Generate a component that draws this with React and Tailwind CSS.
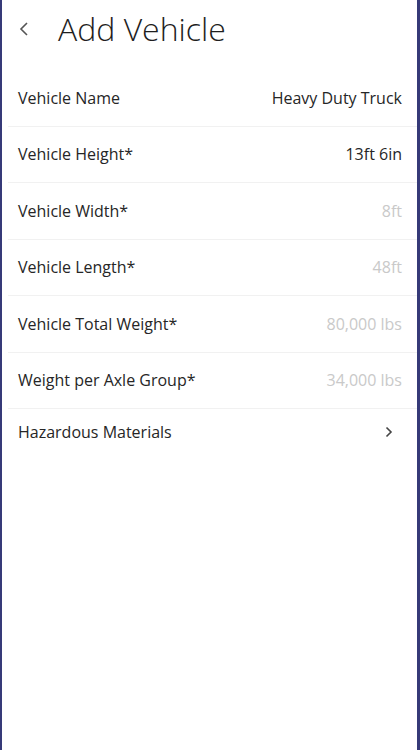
import React from 'react'

const rows = [
	{ label: 'Vehicle Name', value: 'Heavy Duty Truck', filled: true },
	{ label: 'Vehicle Height*', value: '13ft 6in', filled: true },
	{ label: 'Vehicle Width*', value: '8ft' },
	{ label: 'Vehicle Length*', value: '48ft' },
	{ label: 'Vehicle Total Weight*', value: '80,000 lbs' },
	{ label: 'Weight per Axle Group*', value: '34,000 lbs' },
]

function App() {
	return (
		<main
			className="flex h-[750px] w-[420px] flex-col overflow-hidden border-l-2 border-r-[3px] border-[#363a78] bg-white text-[#222]"
			style={{ fontFamily: '"Open Sans", "Noto Sans", sans-serif' }}
		>
			<header className="flex h-[58px] items-center">
				<button type="button" className="ml-[10px] flex h-8 w-6 items-center justify-center text-[#555]" aria-label="Back">
					<svg width="12" height="16" viewBox="0 0 12 16" fill="none" stroke="currentColor" strokeWidth="1.6">
						<path d="M9 2 L3 8 L9 14" />
					</svg>
				</button>
				<h1 className="ml-[22px] text-[32px] font-light leading-none tracking-[0px] text-[#1e1e1e]">Add Vehicle</h1>
			</header>

			<ul className="mt-[12px]">
				{rows.map((row) => (
					<li key={row.label} className="ml-[6px] flex h-[56.5px] items-center justify-between border-b border-[#f1f1f1] pr-[15px] pl-[10px]">
						<span className="text-[16px] text-[#262626]">{row.label}</span>
						<span className={row.filled ? 'text-[16px] text-[#262626]' : 'text-[16px] text-[#c9c9c9]'}>{row.value}</span>
					</li>
				))}
				<li className="ml-[6px] flex h-[46px] items-center justify-between pr-[24px] pl-[10px]">
					<span className="text-[16px] text-[#262626]">Hazardous Materials</span>
					<svg width="8" height="12" viewBox="0 0 8 12" fill="none" stroke="#444" strokeWidth="1.6">
						<path d="M1.5 1.5 L6 6 L1.5 10.5" />
					</svg>
				</li>
			</ul>
		</main>
	)
}

export default App
